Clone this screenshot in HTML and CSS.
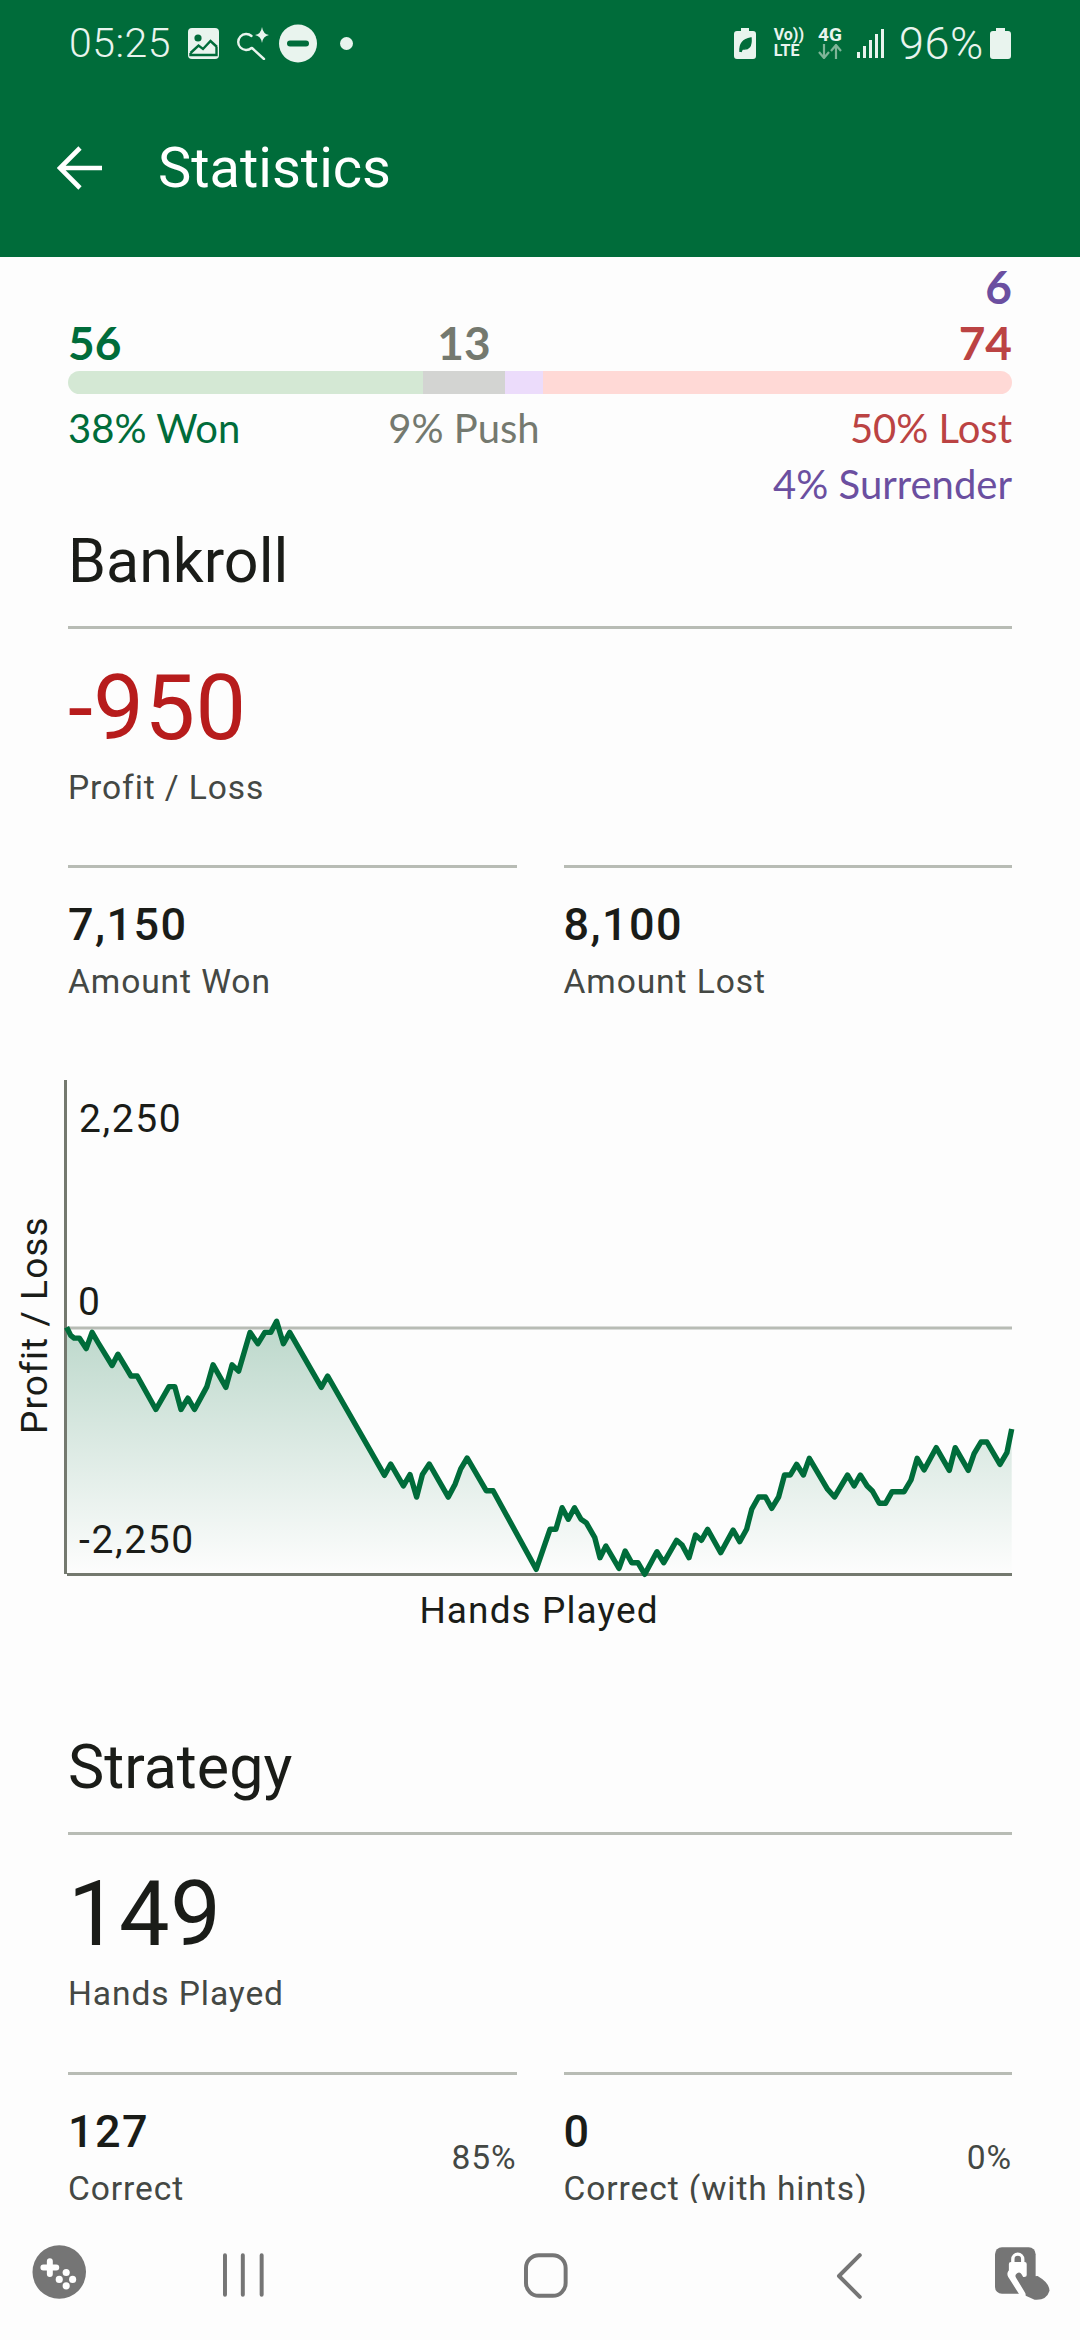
FILE: index.html
```html
<!DOCTYPE html>
<html lang="en">
<head>
    <meta charset="UTF-8">
    <meta name="viewport" content="width=device-width, initial-scale=1.0">
    <title>Statistics</title>
    <link rel="stylesheet" href="styles.css">
</head>
<body>
    <header class="app-header">
        <div class="status-bar">
            <div class="status-group">
                <span class="status-time">05:25</span>
                <svg class="ic-image" width="31" height="31" viewBox="0 0 31 31"><rect width="31" height="31" rx="4" fill="#e9f4ee"/><circle cx="10" cy="10" r="3.6" fill="#006c3a"/><path d="M2.5 25 L10.5 17.5 L15 21 L22.5 13 L29 19 M2.5 25 V27 H28.5 V19" fill="none" stroke="#006c3a" stroke-width="2.4"/></svg>
                <svg class="ic-search" width="33" height="33" viewBox="0 0 33 33"><path d="M15.5 9 A8 8 0 1 0 15.5 21" fill="none" stroke="#e9f4ee" stroke-width="2.4" stroke-linecap="round"/><path d="M16 21 L28 32" stroke="#e9f4ee" stroke-width="2.4" stroke-linecap="round"/><path d="M26 0 Q27 7 33 8 Q27 9 26 16 Q25 9 19 8 Q25 7 26 0Z" fill="#e9f4ee"/></svg>
                <svg class="ic-dnd" width="38" height="39" viewBox="0 0 38 39"><circle cx="19" cy="19.5" r="19" fill="#e9f4ee"/><rect x="8" y="16.5" width="22" height="6" rx="3" fill="#006c3a"/></svg>
                <span class="status-dot"></span>
            </div>
            <div class="status-group">
                <svg class="ic-leaf" width="22" height="31" viewBox="0 0 22 31"><path d="M7 0 H15 V3 H19 Q22 3 22 6 V28 Q22 31 19 31 H3 Q0 31 0 28 V6 Q0 3 3 3 H7Z" fill="#e9f4ee"/><path d="M6 24 Q5 12 17 10 Q18 22 9 21 M7 24 Q9 18 13 15" fill="#006c3a" stroke="#006c3a" stroke-width="1.4"/></svg>
                <span class="net-volte">Vo))<br>LTE</span>
                <span class="net-4g">4G
                    <svg class="ic-arrows" width="24" height="15" viewBox="0 0 24 15"><path d="M6 0 V13 M1 8 L6 14 L11 8 M18 15 V2 M13 7 L18 1 L23 7" fill="none" stroke="#7fb598" stroke-width="2.2"/></svg>
                </span>
                <svg class="ic-signal" width="27" height="29" viewBox="0 0 27 29"><rect x="0" y="23" width="3" height="6" fill="#e9f4ee"/><rect x="6" y="17" width="3" height="12" fill="#e9f4ee"/><rect x="12" y="11" width="3" height="18" fill="#e9f4ee"/><rect x="18" y="5" width="3" height="24" fill="#e9f4ee"/><rect x="24" y="0" width="3" height="29" fill="#e9f4ee"/></svg>
                <span class="status-batt">96%</span>
                <svg class="ic-batt" width="21" height="31" viewBox="0 0 21 31"><path d="M6 0 H15 V3 H18 Q21 3 21 6 V28 Q21 31 18 31 H3 Q0 31 0 28 V6 Q0 3 3 3 H6Z" fill="#e9f4ee"/></svg>
            </div>
        </div>
        <div class="title-row">
            <svg width="45" height="44" viewBox="0 0 45 44"><path d="M45 22 H3 M23 2 L3 22 L23 42" fill="none" stroke="#fff" stroke-width="4.6"/></svg>
            <h1 class="title">Statistics</h1>
        </div>
    </header>

    <main class="content">
        <section class="summary">
            <div class="count-solo c-surrender">6</div>
            <div class="split-row counts">
                <span class="c-won" style="flex-grow:56">56</span>
                <span class="cell-center c-push" style="flex-grow:13">13</span>
                <span style="flex-grow:6"></span>
                <span class="cell-end c-lost" style="flex-grow:74">74</span>
            </div>
            <div class="split-row bar">
                <span class="seg-won" style="flex-grow:56"></span>
                <span class="seg-push" style="flex-grow:13"></span>
                <span class="seg-surrender" style="flex-grow:6"></span>
                <span class="seg-lost" style="flex-grow:74"></span>
            </div>
            <div class="split-row percents">
                <span class="c-won" style="flex-grow:56">38% Won</span>
                <span class="cell-center c-push" style="flex-grow:13">9% Push</span>
                <span style="flex-grow:6"></span>
                <span class="cell-end c-lost" style="flex-grow:74">50% Lost</span>
            </div>
            <div class="percent-solo c-surrender">4% Surrender</div>
        </section>

        <section class="stat-section">
            <h2 class="section-title">Bankroll</h2>
            <div class="stat-main">
                <div class="big-value negative">-950</div>
                <div class="stat-label">Profit / Loss</div>
            </div>
            <div class="stat-pair">
                <div class="stat-cell">
                    <div>
                        <div class="small-value">7,150</div>
                        <div class="stat-label">Amount Won</div>
                    </div>
                </div>
                <div class="stat-cell">
                    <div>
                        <div class="small-value">8,100</div>
                        <div class="stat-label">Amount Lost</div>
                    </div>
                </div>
            </div>
        </section>

        <svg class="chart" width="1080" height="580" viewBox="0 0 1080 580">
            <defs>
                <linearGradient id="areaFade" x1="0" y1="0" x2="0" y2="1">
                    <stop offset="0" stop-color="#006c3a" stop-opacity="0.26"/>
                    <stop offset="1" stop-color="#006c3a" stop-opacity="0"/>
                </linearGradient>
            </defs>
            <path fill="url(#areaFade)" d="M66.6 266.2 L70.7 274.4 74.1 277.1 79.3 277.1 86.2 287.6 92.1 271.4 98.3 282 112.1 304.5 117.9 293.2 131 315 137.2 315 155.9 348.5 169 325.6 174.8 325.6 181 348.5 187.9 337.2 194.5 348.5 206.9 325.6 213.1 303.8 225.9 326.3 232.1 303.8 238.6 310.2 250 271.4 257.9 282.7 264.8 271.4 270.7 271.4 276.6 260.2 283.4 282.7 289.7 271.4 321.4 326.3 327.6 315 384.5 414.3 390.7 403 403.4 424.8 410 413.5 416.6 436.1 422.4 413.5 429.3 403 448.3 436.1 455.2 422.9 460.7 407.9 467.2 397 486.2 429.7 493.1 429.7 536.2 508.3 543.1 488.3 550 468.3 555.9 468.3 562.1 446.7 568.3 458.3 574.5 446.7 581 458.3 586.2 461.7 594.8 476.7 600 496.7 605.9 485 619 507.3 625.2 490 631.7 501.7 637.9 501.7 644.8 513.3 656.9 490.7 663.8 501.7 676.6 479.3 682.1 484 689 496.7 695.5 474 701.4 479.3 707.6 468.3 720.7 491.7 733.1 469 739.7 480.7 746.6 468.3 751.7 448.3 758.6 436 765.5 436 771.7 447.3 778.6 436 784.5 414 790.3 414 796.6 403.3 803.4 414 809.3 397.3 827.6 428.3 834.5 436 847.6 414 854.1 425 860.3 414 867.2 425 872.4 430 879.3 442.3 885.5 442.3 892.1 430.7 904.1 430.7 911 419 917.2 397.3 924.1 409 936.2 386.7 949.3 409.3 955.2 386.7 968.3 409.3 974.1 392.7 981 381 986.9 381 1000 403.3 1006.9 391.7 1011.7 368 V513 H66.6 Z"/>
            <line x1="66" y1="267" x2="1012" y2="267" stroke="#b8bcb5" stroke-width="3"/>
            <line x1="65.5" y1="19" x2="65.5" y2="513" stroke="#74796f" stroke-width="3"/>
            <line x1="67" y1="513.5" x2="1012" y2="513.5" stroke="#74796f" stroke-width="3"/>
            <path fill="none" stroke="#006c3a" stroke-width="5.4" stroke-linejoin="round" d="M66.6 266.2 L70.7 274.4 74.1 277.1 79.3 277.1 86.2 287.6 92.1 271.4 98.3 282 112.1 304.5 117.9 293.2 131 315 137.2 315 155.9 348.5 169 325.6 174.8 325.6 181 348.5 187.9 337.2 194.5 348.5 206.9 325.6 213.1 303.8 225.9 326.3 232.1 303.8 238.6 310.2 250 271.4 257.9 282.7 264.8 271.4 270.7 271.4 276.6 260.2 283.4 282.7 289.7 271.4 321.4 326.3 327.6 315 384.5 414.3 390.7 403 403.4 424.8 410 413.5 416.6 436.1 422.4 413.5 429.3 403 448.3 436.1 455.2 422.9 460.7 407.9 467.2 397 486.2 429.7 493.1 429.7 536.2 508.3 543.1 488.3 550 468.3 555.9 468.3 562.1 446.7 568.3 458.3 574.5 446.7 581 458.3 586.2 461.7 594.8 476.7 600 496.7 605.9 485 619 507.3 625.2 490 631.7 501.7 637.9 501.7 644.8 513.3 656.9 490.7 663.8 501.7 676.6 479.3 682.1 484 689 496.7 695.5 474 701.4 479.3 707.6 468.3 720.7 491.7 733.1 469 739.7 480.7 746.6 468.3 751.7 448.3 758.6 436 765.5 436 771.7 447.3 778.6 436 784.5 414 790.3 414 796.6 403.3 803.4 414 809.3 397.3 827.6 428.3 834.5 436 847.6 414 854.1 425 860.3 414 867.2 425 872.4 430 879.3 442.3 885.5 442.3 892.1 430.7 904.1 430.7 911 419 917.2 397.3 924.1 409 936.2 386.7 949.3 409.3 955.2 386.7 968.3 409.3 974.1 392.7 981 381 986.9 381 1000 403.3 1006.9 391.7 1011.7 368"/>
            <text class="chart-num" x="79" y="71">2,250</text>
            <text class="chart-num" x="78" y="254">0</text>
            <text class="chart-num" x="79" y="492">-2,250</text>
            <text class="chart-text" x="539" y="562" text-anchor="middle">Hands Played</text>
            <text class="chart-text" transform="translate(47 373) rotate(-90)">Profit / Loss</text>
        </svg>

        <section class="stat-section strategy">
            <h2 class="section-title">Strategy</h2>
            <div class="stat-main">
                <div class="big-value">149</div>
                <div class="stat-label">Hands Played</div>
            </div>
            <div class="stat-pair">
                <div class="stat-cell">
                    <div>
                        <div class="small-value">127</div>
                        <div class="stat-label">Correct</div>
                    </div>
                    <span class="stat-percent">85%</span>
                </div>
                <div class="stat-cell">
                    <div>
                        <div class="small-value">0</div>
                        <div class="stat-label">Correct (with hints)</div>
                    </div>
                    <span class="stat-percent">0%</span>
                </div>
            </div>
        </section>
    </main>

    <nav class="nav-bar">
        <svg width="55" height="54" viewBox="0 0 55 54"><circle cx="27.5" cy="27" r="27" fill="#757575"/><path d="M18 16 V29 M11.5 22.5 H24.5" stroke="#fff" stroke-width="6" stroke-linecap="round"/><circle cx="34.5" cy="27.5" r="3.6" fill="#fff"/><circle cx="27.5" cy="34.5" r="3.6" fill="#fff"/><circle cx="41" cy="34.5" r="3.6" fill="#fff"/><circle cx="34.5" cy="41" r="3.6" fill="#fff"/></svg>
        <svg class="nav-recents" width="42" height="44" viewBox="0 0 42 44"><path d="M2 2 V42 M20 2 V42 M39 2 V42" stroke="#757575" stroke-width="4" stroke-linecap="round"/></svg>
        <svg class="nav-home" width="44" height="45" viewBox="0 0 44 45"><rect x="2" y="2" width="40" height="41" rx="13" fill="none" stroke="#757575" stroke-width="4"/></svg>
        <svg class="nav-back" width="26" height="46" viewBox="0 0 26 46"><path d="M24 2 L3 23 L24 44" fill="none" stroke="#757575" stroke-width="4" stroke-linecap="round" stroke-linejoin="round"/></svg>
        <svg class="nav-lock" width="56" height="54" viewBox="0 0 56 54"><rect width="41" height="47" rx="7" fill="#757575"/><rect x="14" y="15" width="18" height="15" rx="2" fill="#fff"/><path d="M18 16 V12 A5 5 0 0 1 28 12 V16" fill="none" stroke="#fff" stroke-width="3.4"/><path d="M18 27 L30 46" stroke="#fff" stroke-width="11" stroke-linecap="round"/><path d="M24 29 L33 44" stroke="#757575" stroke-width="6.5" stroke-linecap="round"/><path d="M29 30 L43 29 Q55 36 55 44 Q52 54 40 53 L31 49Z" fill="#757575"/></svg>
    </nav>
</body>
</html>
```

FILE: styles.css
```css
* {
    box-sizing: border-box;
}
html, body {
    margin: 0;
    padding: 0;
}
body {
    width: 1080px;
    height: 2340px;
    display: flex;
    flex-direction: column;
    overflow: hidden;
    background: #fdfdfd;
    font-family: Roboto, sans-serif;
    color: #1a1c18;
}

/* green header with phone status bar */
.app-header {
    height: 257px;
    flex: none;
    background: #006c3a;
    color: #e9f4ee;
}
.status-bar {
    height: 83px;
    padding: 3px 69px 0 69px;
    display: flex;
    justify-content: space-between;
    align-items: center;
}
.status-group {
    display: flex;
    align-items: center;
}
.status-time {
    font-size: 41px;
    letter-spacing: 0.5px;
    font-weight: 300;
    margin-right: 17px;
}
.ic-search {
    margin-left: 17px;
}
.ic-dnd {
    margin-left: 10px;
}
.status-dot {
    width: 13px;
    height: 13px;
    margin-left: 23px;
    border-radius: 50%;
    background: #e9f4ee;
}
.net-volte {
    margin-left: 18px;
    font-size: 16px;
    line-height: 16px;
    font-weight: 700;
}
.net-4g {
    width: 24px;
    margin-left: 14px;
    display: flex;
    flex-direction: column;
    font-size: 19px;
    line-height: 15px;
    font-weight: 700;
}
.ic-arrows {
    margin-top: 2px;
}
.ic-signal {
    margin-left: 15px;
}
.status-batt {
    margin-left: 15px;
    font-size: 45px;
    letter-spacing: 0.6px;
    font-weight: 300;
}
.ic-batt {
    margin-left: 6px;
}
.title-row {
    height: 174px;
    padding: 0 0 5px 57px;
    display: flex;
    align-items: center;
}
.title {
    margin: 0 0 0 56px;
    font-size: 56px;
    font-weight: 400;
    color: #fff;
}

/* scrolling content, cut off by the nav bar */
.content {
    flex: 1;
    min-height: 0;
    overflow: hidden;
}
.summary {
    padding: 2px 68px 0;
}
.count-solo, .counts {
    font-family: Lato, sans-serif;
    font-size: 46px;
    line-height: 56px;
    font-weight: 700;
}
.count-solo, .percent-solo {
    text-align: right;
}
.percents, .percent-solo {
    font-family: Lato, sans-serif;
    font-size: 40px;
    line-height: 56px;
}
.percents {
    margin-top: 6px;
}
.split-row {
    display: flex;
}
.split-row span {
    flex-basis: 0;
    min-width: 0;
    white-space: nowrap;
    display: flex;
}
.cell-center {
    justify-content: center;
}
.cell-end {
    justify-content: flex-end;
}
.bar {
    height: 23px;
    border-radius: 12px;
    overflow: hidden;
}
.seg-won { background: #d4e8d4; }
.seg-push { background: #d3d4d2; }
.seg-surrender { background: #ecdcfb; }
.seg-lost { background: #ffd9d6; }
.c-won { color: #006c3a; }
.c-push { color: #74796f; }
.c-lost { color: #bb4343; }
.c-surrender { color: #6b4fa0; }

.stat-section {
    padding: 9px 68px 0;
}
.section-title {
    height: 80px;
    margin: 0 0 25px;
    font-size: 61px;
    line-height: 80px;
    font-weight: 400;
}
.stat-main {
    border-top: 3px solid #b8bcb5;
    padding-top: 30px;
}
.big-value {
    font-size: 90px;
    line-height: 100px;
    letter-spacing: 0.5px;
}
.negative {
    color: #b71c1c;
}
.stat-label {
    margin-top: 7px;
    font-size: 33.6px;
    line-height: 44px;
    letter-spacing: 0.9px;
    color: #444844;
    white-space: nowrap;
}
.stat-pair {
    margin-top: 55px;
    display: flex;
    gap: 47px;
}
.stat-cell {
    flex: 1;
    border-top: 3px solid #b8bcb5;
    padding-top: 29px;
    display: flex;
    justify-content: space-between;
    align-items: center;
}
.small-value {
    font-size: 45px;
    line-height: 56px;
    letter-spacing: 1.4px;
    font-weight: 500;
}
.stat-percent {
    font-size: 33.6px;
    letter-spacing: 0.9px;
    color: #444844;
}
.chart {
    display: block;
    margin-top: 57px;
}
.chart-text {
    font-family: Roboto, sans-serif;
    font-size: 37px;
    letter-spacing: 1.1px;
    fill: #1a1c18;
}
.chart-num {
    font-family: Roboto, sans-serif;
    font-size: 39px;
    letter-spacing: 1.6px;
    fill: #1a1c18;
}
.strategy {
    padding-top: 86px;
}
.strategy .stat-pair {
    margin-top: 56px;
}

/* android nav bar */
.nav-bar {
    height: 137px;
    flex: none;
    padding: 42px 30px 0 32px;
    display: flex;
    align-items: flex-start;
    background: #fdfdfd;
}
.nav-recents {
    margin: 8px 0 0 136px;
}
.nav-home {
    margin: 8px 0 0 260px;
}
.nav-back {
    margin: 8px 0 0 268px;
}
.nav-lock {
    margin: 2px 0 0 133px;
}
```
